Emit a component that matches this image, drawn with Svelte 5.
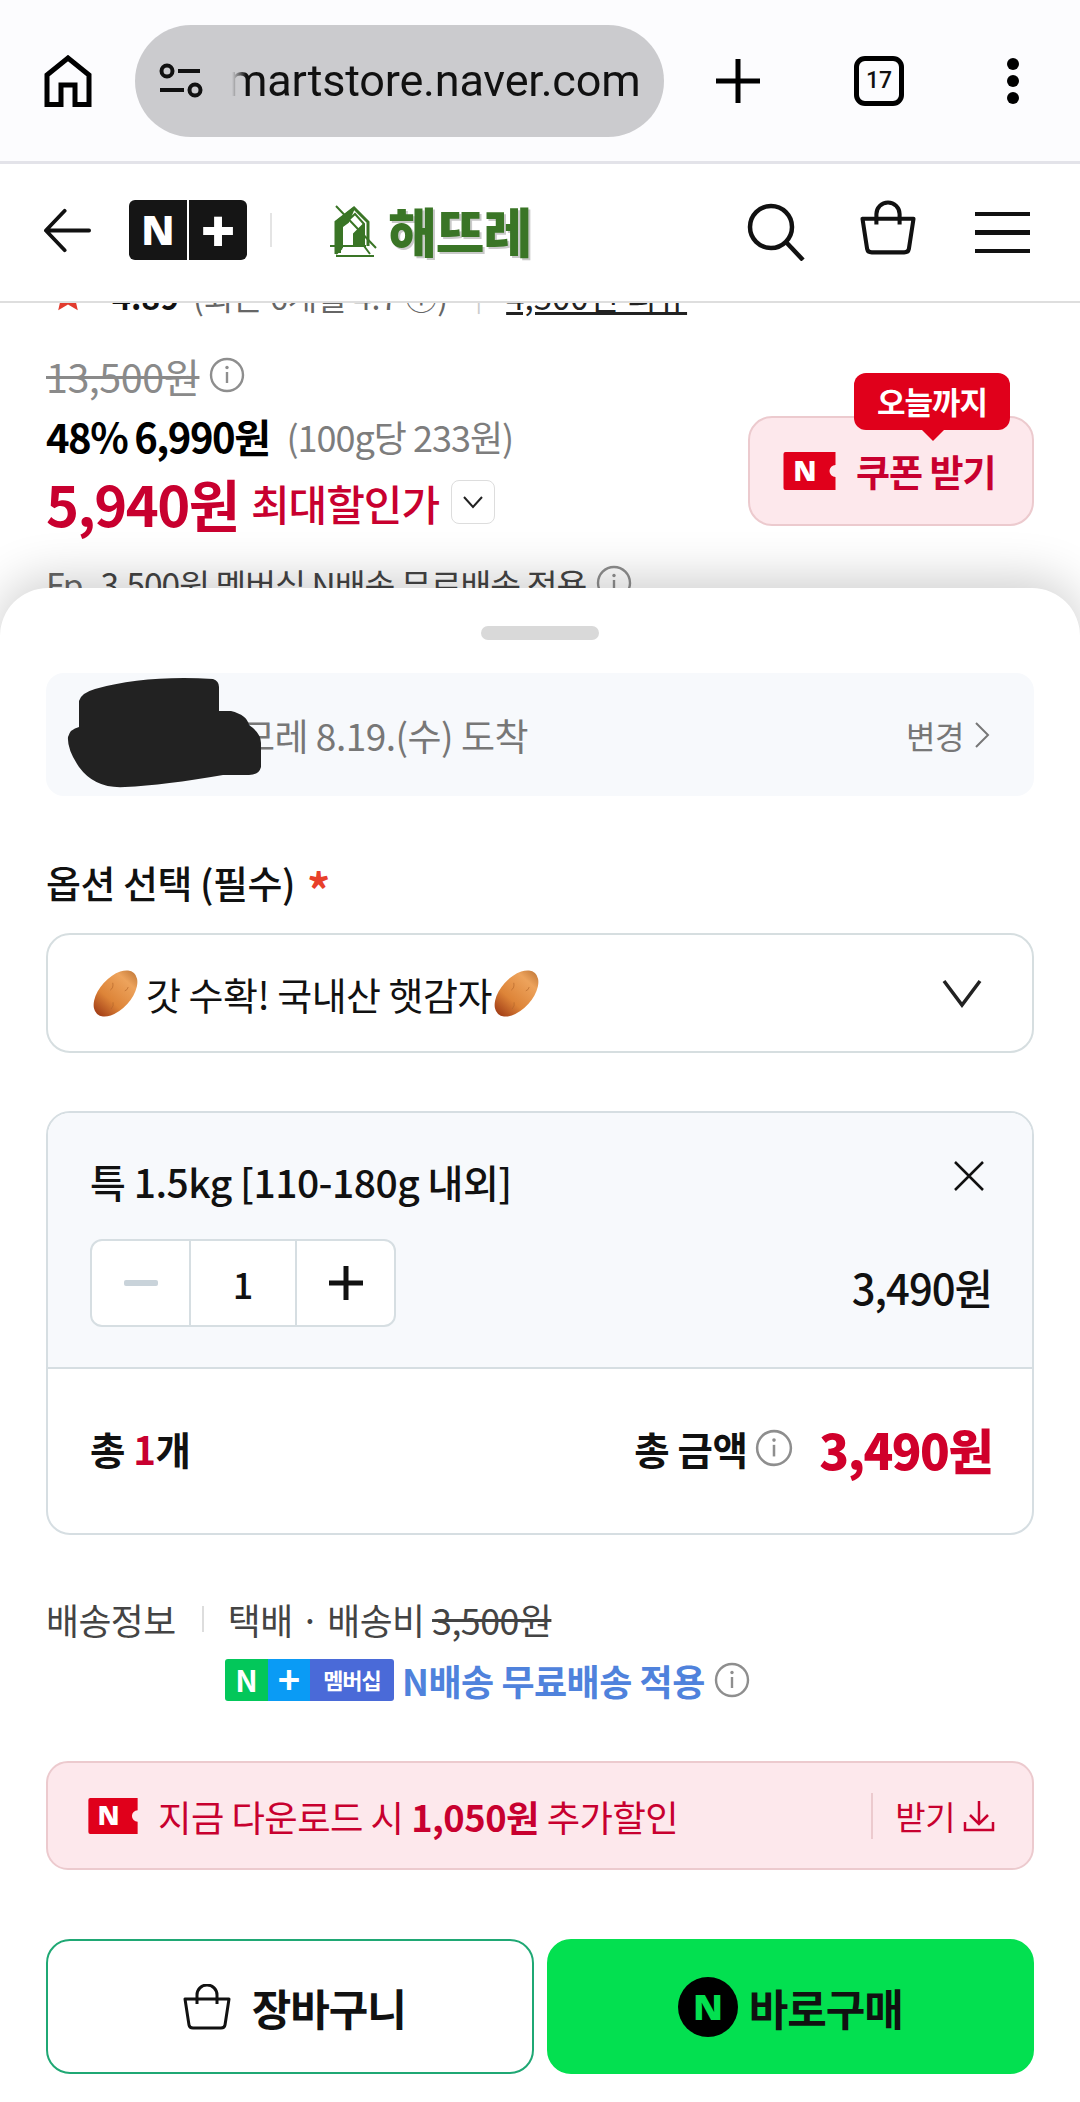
<script>
  const lineItem = { name: '특 1.5kg [110-180g 내외]', qty: 1, price: '3,490원' };
</script>

{#snippet info(size)}
  <svg class="info" width={size} height={size} viewBox="0 0 36 36" fill="none" stroke="#8e8e8e">
    <circle cx="18" cy="18" r="16" stroke-width="2.4" />
    <path d="M18 15v11" stroke-width="2.4" />
    <circle cx="18" cy="10.5" r="1.7" fill="#8e8e8e" stroke="none" />
  </svg>
{/snippet}

{#snippet ticket(w, h)}
  <svg class="ticket" width={w} height={h} viewBox="0 0 52 38">
    <path d="M2 0h50v13a6 6 0 0 0 0 12v13H2a2 2 0 0 1-2-2V2a2 2 0 0 1 2-2z" fill="#e0001b" />
    <text x="21" y="29" text-anchor="middle" class="ticket-n">N</text>
  </svg>
{/snippet}

{#snippet potato()}
  <svg class="potato" width="47" height="49" viewBox="0 0 46 48">
    <g transform="rotate(42 23 24)">
      <ellipse cx="23" cy="24" rx="15.500" ry="27" fill="url(#spud)" />
      <path d="M14 18q4 3 3 7M27 32q3 2 3 6M28 11q1.500 3 0 5" stroke="#b5672c" stroke-width="0.9" fill="none" opacity="0.7" />
    </g>
  </svg>
{/snippet}

{#snippet bag(w, h, sw)}
  <svg width={w} height={h} viewBox="0 0 50 46" fill="none" stroke="#111" stroke-width={sw} stroke-linejoin="round">
    <path d="M3 15h44l-4 26q-.5 3-4 3H11q-3.500 0-4-3z" />
    <path d="M15 20V11a10 10 0 0 1 20 0v9" />
  </svg>
{/snippet}

<svg class="defs" width="0" height="0" aria-hidden="true">
  <defs>
    <linearGradient id="spud" x1="0.5" y1="0" x2="0.5" y2="1">
      <stop offset="0" stop-color="#c9803f" />
      <stop offset="0.2" stop-color="#eda35c" />
      <stop offset="0.65" stop-color="#dd8438" />
      <stop offset="1" stop-color="#a33f17" />
    </linearGradient>
  </defs>
</svg>

<div class="screen">
  <div class="chrome">
    <svg class="home" width="48" height="52" viewBox="0 0 48 52" fill="none" stroke="#000" stroke-width="5">
      <path d="M3 49.500V20L24 3l21 17v29.500H31V30H17v19.500z" />
    </svg>
    <div class="pill">
      <svg width="46" height="36" viewBox="0 0 46 36" fill="none" stroke="#111" stroke-width="4">
        <circle cx="9" cy="8" r="5.500" />
        <path d="M20 8h22M2 27h24" />
        <circle cx="37" cy="27" r="5.500" />
      </svg>
      <div class="url"><span>martstore.naver.com</span></div>
    </div>
    <svg class="plus" width="46" height="46" viewBox="0 0 46 46" stroke="#000" stroke-width="5">
      <path d="M23 1v44M1 23h44" />
    </svg>
    <div class="tabs">17</div>
    <div class="dots"><i></i><i></i><i></i></div>
  </div>

  <header class="site">
    <svg class="back" width="47" height="45" viewBox="0 0 50 46" fill="none" stroke="#111" stroke-width="4" stroke-linecap="round" stroke-linejoin="round">
      <path d="M22 2L2 23l20 21M3 23h45" />
    </svg>
    <div class="nplus"><span>N</span><span>+</span></div>
    <div class="vr"></div>
    <svg class="house" width="54" height="56" viewBox="0 0 54 56" fill="none" stroke="#3a7526" stroke-width="2">
      <path d="M8 52V20L26 6l14 14v24" stroke-width="3" />
      <path d="M14 46V24L27 12l9 10v22H14zM8 52l6-6M36 44l6 8M2 44h36M8 54h38M8 4l40 42" />
      <path d="M8 20L26 6l-6 14-8 6v24H8z" fill="#3a7526" />
      <path d="M26 42V32l8-8v18z" fill="#3a7526" />
    </svg>
    <div class="brand">해뜨레</div>
    <div class="spacer"></div>
    <svg class="search" width="58" height="58" viewBox="0 0 58 58" fill="none" stroke="#111" stroke-width="4.500">
      <circle cx="24" cy="24" r="21" />
      <path d="M39 39l17 18" />
    </svg>
    <div class="h-bag">{@render bag(58, 58, 3.5)}</div>
    <div class="menu"><i></i><i></i><i></i></div>
  </header>

  <main class="product">
    <div class="rating">
      <svg width="36" height="34" viewBox="0 0 24 24"><path d="M12 1l3.200 7.300 7.800.7-5.900 5.200 1.800 7.800L12 18l-6.900 4 1.800-7.800L1 9l7.800-.7z" fill="#e23b2e" /></svg>
      <b>4.89</b>
      <span class="rating-sub">(최근 6개월 4.7 ⓘ)</span>
      <span class="rating-bar">|</span>
      <u>4,500건 리뷰</u>
    </div>

    <div class="price-row">
      <div class="prices">
        <div class="old"><s>13,500원</s>{@render info(36)}</div>
        <div class="sale"><b>48%</b><b class="sale-price">6,990원</b><span>(100g당 233원)</span></div>
        <div class="best">
          <b>5,940원</b><span>최대할인가</span>
          <div class="chev-box">
            <svg width="22" height="14" viewBox="0 0 22 14" fill="none" stroke="#222" stroke-width="2"><path d="M2 2l9 10 9-10" /></svg>
          </div>
        </div>
      </div>
      <div class="coupon">
        <div class="today">오늘까지</div>
        {@render ticket(53, 38)}
        <span>쿠폰 받기</span>
      </div>
    </div>

    <div class="ship-peek">
      <span class="peek-icon">Fp</span> 3,500원 멤버십 N배송 무료배송 적용 {@render info(36)}
    </div>
  </main>

  <section class="sheet">
    <div class="handle"></div>

    <div class="delivery">
      <svg class="scribble" width="198" height="112" viewBox="0 0 198 112">
        <path d="M14 50V24Q16 16 30 12 80 -2 148 2q6 2 6 8v24h12q16 4 18 14 12 8 12 18v24q-2 8-12 8h-26Q100 108 60 110 30 112 14 90 2 72 3 60q2-8 11-10z" fill="#222" />
      </svg>
      <span class="arrive">모레 8.19.(수) 도착</span>
      <span class="change">변경
        <svg width="16" height="28" viewBox="0 0 16 28" fill="none" stroke="#777" stroke-width="2"><path d="M2 2l12 12L2 26" /></svg>
      </span>
    </div>

    <div class="opt-title">옵션 선택 (필수)<em>*</em></div>

    <div class="select">
      {@render potato()}
      <span class="sel-label">갓 수확! 국내산 햇감자</span>
      {@render potato()}
      <svg class="sel-chev" width="40" height="30" viewBox="0 0 40 30" fill="none" stroke="#222" stroke-width="3.500"><path d="M2 3l18 24L38 3" /></svg>
    </div>

    <div class="card">
      <div class="card-top">
        <div class="item-name">
          <span>{lineItem.name}</span>
          <svg width="32" height="32" viewBox="0 0 32 32" stroke="#111" stroke-width="2.500"><path d="M2 2l28 28M30 2L2 30" /></svg>
        </div>
        <div class="item-row">
          <div class="stepper">
            <div class="cell">
              <svg width="34" height="6" viewBox="0 0 34 6"><rect width="34" height="6" rx="2" fill="#c9d3da" /></svg>
            </div>
            <div class="cell qty">{lineItem.qty}</div>
            <div class="cell">
              <svg width="34" height="34" viewBox="0 0 34 34" stroke="#111" stroke-width="5"><path d="M17 0v34M0 17h34" /></svg>
            </div>
          </div>
          <div class="item-price">{lineItem.price}</div>
        </div>
      </div>
      <div class="card-total">
        <div class="count">총 <em>{lineItem.qty}</em>개</div>
        <div class="sum">
          <span>총 금액</span>
          {@render info(38)}
          <strong>{lineItem.price}</strong>
        </div>
      </div>
    </div>

    <div class="ship">
      <span class="ship-label">배송정보</span>
      <span class="ship-vr"></span>
      <span>택배 · 배송비 <s>3,500원</s></span>
    </div>
    <div class="member">
      <div class="badge">
        <span class="b-n">N</span><span class="b-p">+</span><span class="b-m">멤버십</span>
      </div>
      <span class="member-text">N배송 무료배송 적용</span>
      {@render info(36)}
    </div>

    <div class="banner">
      {@render ticket(50, 36)}
      <span class="banner-text">지금 다운로드 시 <b>1,050원</b> 추가할인</span>
      <div class="banner-get">
        받기
        <svg width="32" height="32" viewBox="0 0 32 32" fill="none" stroke="#c8002f" stroke-width="2.500"><path d="M16 1v22M7 15l9 9 9-9M2 22v8h28v-8" /></svg>
      </div>
    </div>

    <div class="actions">
      <button class="cart">{@render bag(50, 46, 3)}<span>장바구니</span></button>
      <button class="buy"><span class="n-circle">N</span><span>바로구매</span></button>
    </div>
  </section>
</div>

<style>
  :global(body) {
    margin: 0;
    background: #fff;
  }

  .defs {
    position: absolute;
  }

  .screen {
    position: relative;
    width: 1080px;
    height: 2102px;
    overflow: hidden;
    background: #fff;
    color: #111;
    font-family: "Noto Sans CJK KR", "Noto Sans", sans-serif;
  }

  /* browser bar */
  .chrome {
    display: flex;
    align-items: center;
    height: 161px;
    padding-left: 44px;
    background: #fcfcfe;
    border-bottom: 3px solid #e3e3e9;
  }

  .home {
    flex: none;
  }

  .pill {
    display: flex;
    align-items: center;
    box-sizing: border-box;
    width: 529px;
    height: 112px;
    margin-left: 43px;
    padding-left: 23px;
    border-radius: 56px;
    background: #cbcbce;
  }

  .url {
    margin-left: 24px;
    font: 400 45px Roboto, sans-serif;
    letter-spacing: -0.2px;
    color: #111;
    white-space: nowrap;
    mask-image: linear-gradient(to right, transparent 0, transparent 4px, #000 18px);
  }

  .plus {
    margin-left: 51px;
  }

  .tabs {
    display: flex;
    align-items: center;
    justify-content: center;
    box-sizing: border-box;
    width: 50px;
    height: 50px;
    margin-left: 93px;
    border: 5px solid #000;
    border-radius: 11px;
    font: 500 23px Roboto, sans-serif;
  }

  .dots {
    display: flex;
    flex-direction: column;
    gap: 5px;
    margin-left: 103px;
  }

  .dots i {
    width: 12px;
    height: 12px;
    border-radius: 50%;
    background: #000;
  }

  /* store header */
  .site {
    position: relative;
    z-index: 2;
    display: flex;
    align-items: center;
    height: 137px;
    padding: 0 50px 0 44px;
    background: #fff;
    border-bottom: 2px solid #dedede;
  }

  .back {
    margin-bottom: 4px;
  }

  .nplus {
    display: flex;
    gap: 2px;
    margin: 0 0 6px 38px;
  }

  .nplus span {
    display: flex;
    align-items: center;
    justify-content: center;
    width: 58px;
    height: 60px;
    background: #151515;
    color: #fff;
    font: 900 40px/1 "Noto Sans", sans-serif;
  }

  .nplus span:first-child {
    border-radius: 6px 0 0 6px;
  }

  .nplus span:last-child {
    border-radius: 0 6px 6px 0;
    font-size: 60px;
  }

  .vr {
    width: 2px;
    height: 34px;
    margin: 0 0 6px 23px;
    background: #e4e4e4;
  }

  .house {
    margin: 0 0 6px 56px;
  }

  .brand {
    margin: 0 0 6px 6px;
    font-size: 53px;
    font-weight: 900;
    line-height: 56px;
    letter-spacing: -1px;
    color: #3a7526;
    text-shadow: 2px 2px 0 #c9c9c9;
  }

  .spacer {
    flex: 1;
  }

  .search {
    margin-bottom: 2px;
  }

  .h-bag {
    margin: 0 0 4px 54px;
  }

  .menu {
    display: flex;
    flex-direction: column;
    gap: 14px;
    margin-left: 58px;
  }

  .menu i {
    width: 55px;
    height: 4.500px;
    background: #111;
  }

  /* product under the sheet */
  .product {
    padding: 0 46px;
  }

  .rating {
    display: flex;
    align-items: center;
    height: 44px;
    margin-top: -29px;
    padding-left: 4px;
    font-size: 32px;
    line-height: 44px;
    color: #666;
    white-space: nowrap;
  }

  .rating b {
    margin-left: 26px;
    color: #111;
  }

  .rating-sub {
    margin-left: 14px;
  }

  .rating-bar {
    margin: 0 24px 0 27px;
    font-size: 26px;
    color: #ccc;
  }

  .rating u {
    font-size: 33px;
    color: #222;
  }

  .price-row {
    display: flex;
    justify-content: space-between;
    margin-top: 37px;
  }

  .old {
    display: flex;
    align-items: center;
    gap: 10px;
    height: 40px;
    font-size: 39.500px;
    letter-spacing: -0.500px;
    color: #8a8a8a;
  }

  .sale {
    display: flex;
    align-items: center;
    height: 44px;
    margin-top: 19px;
    font-size: 40px;
    letter-spacing: -1.500px;
    white-space: nowrap;
    color: #000;
  }

  .sale-price {
    margin-left: 7px;
  }

  .sale span {
    margin-left: 17px;
    font-size: 36px;
    letter-spacing: -1px;
    color: #7d7d7d;
  }

  .best {
    display: flex;
    align-items: center;
    height: 64px;
    margin-top: 12px;
    color: #c8002f;
    white-space: nowrap;
  }

  .best b {
    font-size: 56px;
    letter-spacing: -1.500px;
  }

  .best span {
    margin-left: 12px;
    font-size: 42px;
    font-weight: 500;
    letter-spacing: -1px;
  }

  .chev-box {
    display: flex;
    align-items: center;
    justify-content: center;
    box-sizing: border-box;
    width: 44px;
    height: 44px;
    margin-left: 12px;
    border: 1.500px solid #ddd;
    border-radius: 8px;
  }

  .coupon {
    position: relative;
    display: flex;
    align-items: center;
    gap: 20px;
    box-sizing: border-box;
    width: 286px;
    height: 110px;
    margin-top: 61px;
    padding: 0 0 0 33px;
    background: #fde8ec;
    border: 2px solid #eccace;
    border-radius: 24px;
    font-size: 37px;
    font-weight: 700;
    letter-spacing: -1px;
    color: #c8002f;
  }

  .today {
    position: absolute;
    top: -45px;
    left: 104px;
    width: 156px;
    height: 57px;
    border-radius: 12px;
    background: #e0001b;
    color: #fff;
    font-size: 31px;
    line-height: 55px;
    text-align: center;
  }

  .today::after {
    content: "";
    position: absolute;
    bottom: -11px;
    left: 68px;
    border: 11px solid transparent;
    border-bottom: 0;
    border-top-color: #e0001b;
  }

  .ship-peek {
    display: flex;
    align-items: center;
    gap: 10px;
    height: 44px;
    margin-top: 27px;
    font-size: 33.500px;
    letter-spacing: -1px;
    white-space: nowrap;
    color: #444;
  }

  .peek-icon {
    margin-right: 8px;
    color: #666;
  }

  /* bottom sheet */
  .sheet {
    position: absolute;
    top: 588px;
    left: 0;
    right: 0;
    bottom: 0;
    padding: 38px 46px 0;
    border-radius: 48px 48px 0 0;
    background: #fff;
    box-shadow: 0 -8px 50px rgba(0, 0, 0, 0.2);
  }

  .handle {
    width: 118px;
    height: 14px;
    margin: 0 auto;
    border-radius: 7px;
    background: #d9d9d9;
  }

  .delivery {
    position: relative;
    display: flex;
    align-items: center;
    justify-content: space-between;
    height: 123px;
    margin-top: 33px;
    padding: 0 44px 0 195px;
    border-radius: 18px;
    background: #f7f9fc;
    color: #777;
    font-size: 37px;
    letter-spacing: -0.500px;
  }

  .scribble {
    position: absolute;
    top: 4px;
    left: 19px;
  }

  .change {
    display: flex;
    align-items: center;
    gap: 10px;
    font-size: 32px;
  }

  .opt-title {
    display: flex;
    height: 50px;
    margin-top: 61px;
    font-size: 38px;
    font-weight: 500;
    line-height: 50px;
    letter-spacing: -0.500px;
  }

  .opt-title em {
    margin-left: 12px;
    font-size: 46px;
    font-style: normal;
    font-weight: 700;
    line-height: 62px;
    color: #e8402a;
  }

  .select {
    display: flex;
    align-items: center;
    box-sizing: border-box;
    height: 120px;
    margin-top: 26px;
    padding: 0 50px 0 44px;
    border: 2px solid #d6dee0;
    border-radius: 24px;
    font-size: 38px;
    letter-spacing: -0.500px;
    white-space: nowrap;
  }

  .sel-label {
    margin: 0 1px 0 7px;
  }

  .sel-chev {
    margin-left: auto;
  }

  .card {
    display: flex;
    flex-direction: column;
    box-sizing: border-box;
    height: 424px;
    margin-top: 58px;
    border: 2px solid #d6dee2;
    border-radius: 24px;
    overflow: hidden;
  }

  .card-top {
    box-sizing: border-box;
    height: 256px;
    padding: 45px 42px 0;
    background: #f7f9fc;
    border-bottom: 2px solid #d6dee2;
  }

  .item-name {
    display: flex;
    justify-content: space-between;
    height: 46px;
    font-size: 39px;
    font-weight: 500;
    line-height: 46px;
    letter-spacing: -0.500px;
  }

  .item-name svg {
    margin: 2px 5px 0 0;
  }

  .item-row {
    display: flex;
    align-items: flex-end;
    justify-content: space-between;
    margin-top: 35px;
  }

  .stepper {
    display: flex;
    box-sizing: border-box;
    width: 306px;
    height: 88px;
    background: #fff;
    border: 2px solid #d6dee2;
    border-radius: 12px;
  }

  .cell {
    display: flex;
    flex: 1;
    align-items: center;
    justify-content: center;
  }

  .qty {
    flex: none;
    width: 104px;
    border-left: 2px solid #d6dee2;
    border-right: 2px solid #d6dee2;
    font-size: 36px;
    font-weight: 500;
  }

  .item-price {
    height: 70px;
    margin-right: -2px;
    font-size: 41.800px;
    font-weight: 500;
    line-height: 60px;
    letter-spacing: -1px;
  }

  .card-total {
    display: flex;
    flex: 1;
    align-items: center;
    justify-content: space-between;
    padding: 0 42px 6px;
    font-size: 38.500px;
    font-weight: 700;
    letter-spacing: -0.500px;
  }

  .count em {
    font-style: normal;
    color: #c8002f;
  }

  .sum {
    display: flex;
    align-items: center;
    gap: 8px;
    margin-right: -2px;
  }

  .sum strong {
    margin-left: 18px;
    font-size: 49px;
    letter-spacing: -1.500px;
    color: #d0002b;
  }

  .ship {
    display: flex;
    align-items: center;
    height: 44px;
    margin-top: 62px;
    font-size: 35.800px;
    letter-spacing: -0.500px;
    color: #444;
  }

  .ship-vr {
    width: 2px;
    height: 26px;
    margin: 0 24px 0 26px;
    background: #ddd;
  }

  .member {
    display: flex;
    align-items: center;
    height: 42px;
    margin: 18px 0 0 179px;
  }

  .badge {
    display: flex;
    height: 42px;
    border-radius: 3px;
    overflow: hidden;
    color: #fff;
    font-weight: 700;
    text-align: center;
  }

  .b-n {
    width: 43px;
    background: #03c75a;
    font-size: 30px;
    line-height: 41px;
  }

  .b-p {
    width: 42px;
    background: #0a9bf5;
    font-size: 38px;
    line-height: 38px;
  }

  .b-m {
    width: 84px;
    background: #4a6ad8;
    font-size: 22px;
    line-height: 41px;
    letter-spacing: -1px;
  }

  .member-text {
    margin: 0 9px 0 8px;
    font-size: 36px;
    font-weight: 700;
    letter-spacing: -0.500px;
    color: #4f82dc;
  }

  .banner {
    display: flex;
    align-items: center;
    box-sizing: border-box;
    height: 109px;
    margin-top: 60px;
    padding: 0 37px 0 40px;
    background: #fde8ec;
    border: 2px solid #eccace;
    border-radius: 22px;
    font-size: 36.300px;
    letter-spacing: -0.500px;
    color: #c8002f;
  }

  .banner-text {
    margin-left: 20px;
  }

  .banner-get {
    display: flex;
    align-items: center;
    gap: 8px;
    height: 46px;
    margin-left: auto;
    padding-left: 22px;
    border-left: 2px solid #eccace;
    font-size: 33px;
  }

  .actions {
    display: flex;
    gap: 13px;
    margin-top: 69px;
  }

  .actions button {
    display: flex;
    flex: 1;
    align-items: center;
    justify-content: center;
    box-sizing: border-box;
    height: 135px;
    border-radius: 24px;
    font-family: inherit;
    font-size: 43px;
    font-weight: 700;
    letter-spacing: -1px;
    color: #111;
  }

  .cart {
    gap: 20px;
    background: #fff;
    border: 2px solid #1fa874;
  }

  .cart svg {
    margin-left: 8px;
  }

  .buy {
    gap: 11px;
    background: #03e050;
    border: 2px solid #03e050;
  }

  .n-circle {
    display: flex;
    align-items: center;
    justify-content: center;
    width: 60px;
    height: 60px;
    border-radius: 50%;
    background: #000;
    color: #03e050;
    font: 900 36px/1 "Noto Sans", sans-serif;
  }

  .ticket-n {
    fill: #fff;
    font: 900 28px "Noto Sans", sans-serif;
  }
</style>
